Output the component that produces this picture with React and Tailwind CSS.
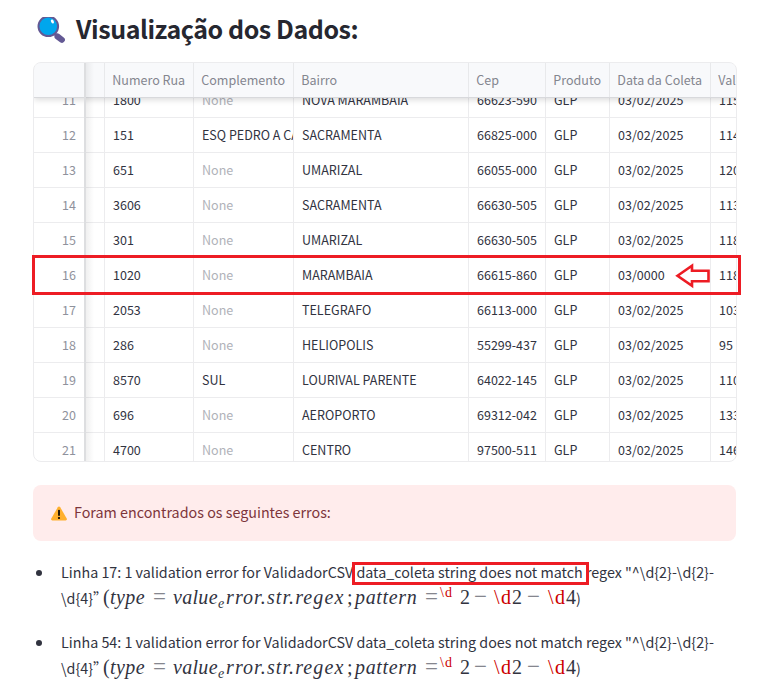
const SANS = "font-['Noto_Sans_CJK_SC','Noto_Sans',sans-serif]";

const COLUMNS = [
  { key: "spacer", label: "", width: "w-[20px]" },
  { key: "numero", label: "Numero Rua", width: "w-[89px]" },
  { key: "complemento", label: "Complemento", width: "w-[100px]" },
  { key: "bairro", label: "Bairro", width: "w-[175px]" },
  { key: "cep", label: "Cep", width: "w-[77px]" },
  { key: "produto", label: "Produto", width: "w-[64px]" },
  { key: "data", label: "Data da Coleta", width: "w-[101px]" },
  { key: "valor", label: "Valor", width: "w-[60px]" },
];

const D = "03/02/2025";
const ROWS = [
  [11, "1800", null, "NOVA MARAMBAIA", "66623-590", D, "115"],
  [12, "151", "ESQ PEDRO A CABRAL", "SACRAMENTA", "66825-000", D, "114"],
  [13, "651", null, "UMARIZAL", "66055-000", D, "120"],
  [14, "3606", null, "SACRAMENTA", "66630-505", D, "113"],
  [15, "301", null, "UMARIZAL", "66630-505", D, "118"],
  [16, "1020", null, "MARAMBAIA", "66615-860", "03/0000", "118"],
  [17, "2053", null, "TELEGRAFO", "66113-000", D, "103"],
  [18, "286", null, "HELIOPOLIS", "55299-437", D, "95"],
  [19, "8570", "SUL", "LOURIVAL PARENTE", "64022-145", D, "110"],
  [20, "696", null, "AEROPORTO", "69312-042", D, "133"],
  [21, "4700", null, "CENTRO", "97500-511", D, "146"],
];

function Magnifier() {
  return (
    <svg width="29" height="28" viewBox="0 0 29 28" className="shrink-0">
      <path d="M17 16 19.500 18.500" stroke="#635994" strokeWidth="3" />
      <path d="M20.500 19.500 24.900 22.800" stroke="#635994" strokeWidth="6" strokeLinecap="round" />
      <circle cx="11.300" cy="9.300" r="9.800" fill="#00a6ed" stroke="#635994" strokeWidth="2" />
      <ellipse cx="15.400" cy="4.500" rx="1.400" ry="2.100" fill="#fff" transform="rotate(-25 15.400 4.500)" />
    </svg>
  );
}

function Warning() {
  return (
    <svg width="16" height="15" viewBox="0 0 16 15" className="shrink-0">
      <path d="M8 .4c.5 0 .9.3 1.2.8l6.5 11.4c.5.9 0 1.9-1 1.9H1.3c-1 0-1.500-1-1-1.900L6.800 1.200C7.100.700 7.500.400 8 .400Z" fill="#ffb02e" />
      <path d="M8 4.500v4.600" stroke="#000" strokeWidth="1.700" strokeLinecap="round" />
      <circle cx="8" cy="12" r="1.100" fill="#000" />
    </svg>
  );
}

function Row({ row }) {
  const [n, numero, complemento, bairro, cep, data, valor] = row;
  const values = ["", numero, complemento, bairro, cep, "GLP", data, valor];
  return (
    <div className="flex h-[35px] shrink-0 border-b border-[#ececee] text-[12.53px] leading-[34px] text-[#31333f]">
      <div className="w-[50px] shrink-0 pr-[8px] text-right text-[#8f929c]">{n}</div>
      {COLUMNS.map((c, i) => (
        <div
          key={c.key}
          className={`${c.width} shrink-0 overflow-hidden whitespace-nowrap border-l border-[#ececee] pl-[8px] ${values[i] === null ? "text-[#b0b2b9]" : ""}`}
        >
          {values[i] === null ? "None" : values[i]}
        </div>
      ))}
    </div>
  );
}

function DataGrid() {
  return (
    <div className="relative ml-[33px] h-[400px] w-[704px]">
      <div className="flex h-full flex-col overflow-hidden rounded-[8px] border border-[#ececee]">
        <div className="relative z-10 flex h-[35px] shrink-0 border-b border-[#d8d9dc] bg-[#f8f9fb] text-[12.53px] leading-[34px] text-[#84868f] shadow-[0_2px_6px_rgba(0,0,0,0.14)]">
          <div className="w-[50px] shrink-0" />
          {COLUMNS.map((c) => (
            <div key={c.key} className={`${c.width} shrink-0 overflow-hidden whitespace-nowrap border-l border-[#e8e9eb] pl-[7.300px]`}>
              {c.label}
            </div>
          ))}
        </div>
        <div className="-mt-[15px] flex flex-col">
          {ROWS.map((r) => (
            <Row key={r[0]} row={r} />
          ))}
        </div>
      </div>
      <div className="absolute left-[51px] top-[1px] z-20 h-[398px] w-[10px] border-l-2 border-[#dddee0] bg-linear-to-r from-black/6 to-transparent" />
      <div className="absolute -left-[1px] top-[193px] z-30 h-[40px] w-[709px] border-3 border-[#ed1c24]" />
      <svg className="absolute left-[642px] top-[201px] z-30" width="36" height="26" viewBox="0 0 36 26">
        <path d="M2.500 12.700 17 2.800V7.700H33.500V18.200H17V22.700Z" fill="#fff" stroke="#ed1c24" strokeWidth="2.600" />
      </svg>
    </div>
  );
}

function Formula() {
  const red = "text-[#cc0000]";
  return (
    <div className="flex h-[25px] items-baseline whitespace-nowrap text-[20px] leading-[25px] text-[#31333f] font-['Liberation_Serif',serif]">
      <span className={`w-[42px] shrink-0 text-[14.320px] ${SANS}`}>{"\\d{4}”"}</span>
      <span className="w-[7px]">(</span>
      <span className="w-[43px] italic tracking-[0.4px]">type</span>
      <span className="w-[20px] text-[23px] text-[#85868e]">=</span>
      <span className="w-[45px] italic tracking-[0.3px]">value</span>
      <span className="relative top-[4px] w-[8px] text-[14px] italic">e</span>
      <span className="w-[121px] italic tracking-[1.1px]">rror.str.regex</span>
      <span className="w-[8px]">;</span>
      <span className="w-[70px] italic tracking-[0.65px]">pattern</span>
      <span className="w-[15px] text-[23px] text-[#85868e]">=</span>
      <span className={`relative -top-[7px] w-[20px] text-[14px] tracking-[1px] ${red}`}>\d</span>
      <span className="w-[14px]">2</span>
      <span className="w-[20px] text-[23px] text-[#85868e]">−</span>
      <span className={`w-[18px] tracking-[1.500px] ${red}`}>\d</span>
      <span className="w-[15px]">2</span>
      <span className="w-[21px] text-[23px] text-[#85868e]">−</span>
      <span className={`w-[18px] tracking-[1.500px] ${red}`}>\d</span>
      <span className="w-[10px]">4</span>
      <span className={`text-[14.320px] ${SANS}`}>)</span>
    </div>
  );
}

function ErrorItem({ line, highlighted }) {
  return (
    <li className="flex h-[70px] text-[14.320px] leading-[25px] text-[#31333f]">
      <span className="mt-[11px] mr-[19px] size-[6px] shrink-0 rounded-full bg-[#31333f]" />
      <div>
        <div className="whitespace-nowrap">
          Linha {line}: 1 validation error for ValidadorCSV{" "}
          <span className="relative">
            data_coleta string does not match
            {highlighted && <span className="absolute -left-[4px] top-[1px] h-[23px] w-[237px] border-3 border-[#ed1c24]" />}
          </span>
          {' regex "^\\d{2}-\\d{2}-'}
        </div>
        <Formula />
      </div>
    </li>
  );
}

export default function App() {
  return (
    <div className={`h-[682px] w-[769px] overflow-hidden bg-white ${SANS}`}>
      <div className="flex h-[62px] pl-[37px]">
        <div className="mt-[17px] mr-[10px] h-[28px] w-[29px]">
          <Magnifier />
        </div>
        <h1 className="mt-[11px] text-[25px] font-bold leading-[34px] tracking-[-0.43px] text-[#262730]">Visualização dos Dados:</h1>
      </div>
      <DataGrid />
      <div className="mt-[23px] ml-[33px] flex h-[56px] w-[703px] items-center rounded-[8px] bg-[#ffecec] pl-[18px] text-[14.320px] text-[#7d353b]">
        <Warning />
        <span className="-mt-[2px] ml-[7px]">Foram encontrados os seguintes erros:</span>
      </div>
      <ul className="mt-[18px] pl-[36px]">
        <ErrorItem line={17} highlighted />
        <ErrorItem line={54} />
      </ul>
    </div>
  );
}
